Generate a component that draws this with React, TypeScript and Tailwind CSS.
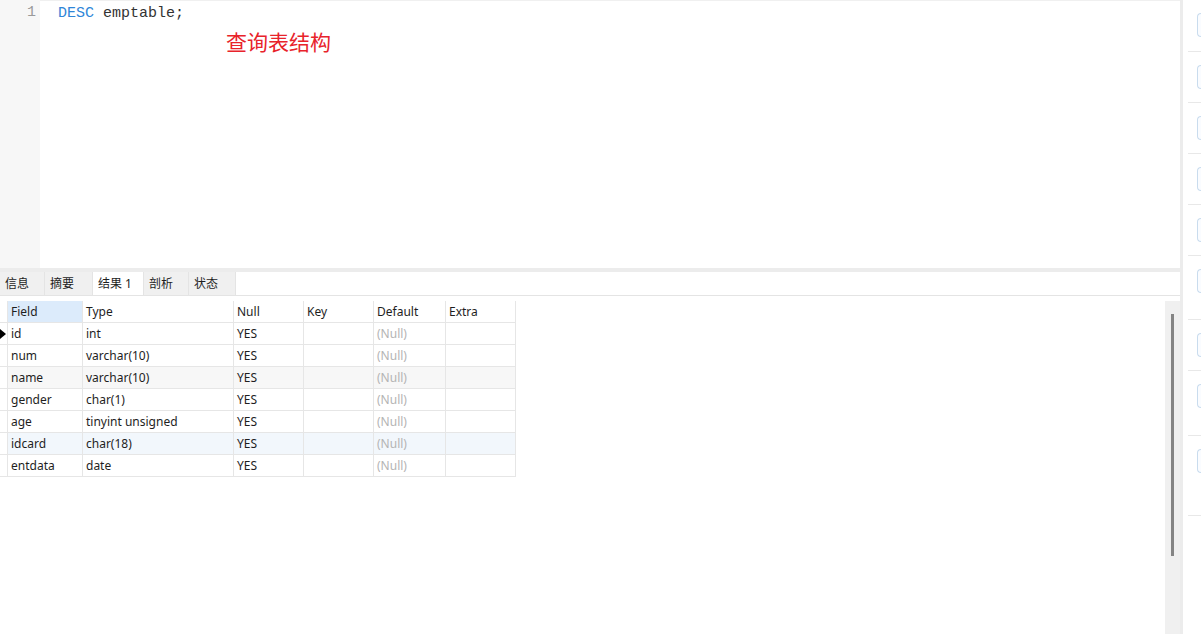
const rows = [
  { field: "id", type: "int", bg: "bg-white" },
  { field: "num", type: "varchar(10)", bg: "bg-white" },
  { field: "name", type: "varchar(10)", bg: "bg-[#f7f7f7]" },
  { field: "gender", type: "char(1)", bg: "bg-white" },
  { field: "age", type: "tinyint unsigned", bg: "bg-white" },
  { field: "idcard", type: "char(18)", bg: "bg-[#f2f7fc]" },
  { field: "entdata", type: "date", bg: "bg-white" },
];

const tabs = [
  { label: "信息", w: "w-[45px]" },
  { label: "摘要", w: "w-[48px]" },
  { label: "结果 1", w: "w-[51px]", active: true },
  { label: "剖析", w: "w-[45px]" },
  { label: "状态", w: "w-[47px]" },
];

const cell = "h-[22px] border-r border-b border-[#e6e6e6] pl-[3px] pt-[1px] flex items-center truncate";

function Sidebar() {
  const blocks = [52, 51, 51, 51, 51, 64, 51, 65, 80];
  return (
    <div className="flex-1 flex flex-col pl-[5px]">
      {blocks.map((h, i) => (
        <div key={i} className="border-b border-[#e8e8e8] flex items-start pt-[13px] pl-[9px]" style={{ height: h }}>
          <div className="w-[8px] h-[24px] rounded-l-[4px] border border-r-0 border-[#c9dcee] bg-[#fafcff]" />
        </div>
      ))}
    </div>
  );
}

export default function App() {
  return (
    <div className="w-[1201px] h-[634px] flex bg-white overflow-hidden font-['Noto_Sans','Noto_Sans_CJK_SC',sans-serif] text-[#1e1e1e]">
      <div className="w-[1183px] shrink-0 flex flex-col border-r-[3px] border-[#ececec]">
        {/* editor */}
        <div className="h-[268px] flex">
          <div className="w-[40px] bg-[#f7f7f7] pt-[3px] pr-[4px] text-right font-['Liberation_Mono',monospace] text-[15px] leading-[20px] text-[#9a9a9a]">
            1
          </div>
          <div className="flex-1 pl-[18px] pt-[3px] border-t border-[#f0f0f0]">
            <div className="font-['Liberation_Mono',monospace] text-[15px] leading-[20px] text-[#333]">
              <span className="text-[#2f86d8]">DESC</span> emptable;
            </div>
            <div className="pl-[168px] pt-[4px] text-[21px] leading-[26px] text-[#e8232b] font-['Noto_Sans_CJK_SC',sans-serif]">
              查询表结构
            </div>
          </div>
        </div>
        <div className="h-[4px] bg-[#ececec]" />
        {/* tabs */}
        <div className="h-[24px] flex border-b border-[#e4e4e4] text-[12px]">
          {tabs.map((t) => (
            <div
              key={t.label}
              className={`${t.w} h-full flex items-center pl-[5px] pt-[1px] border-r border-[#e4e4e4] ${t.active ? "bg-white" : "bg-[#f0f0f0]"}`}
            >
              {t.label}
            </div>
          ))}
        </div>
        {/* results */}
        <div className="flex-1 flex pt-[5px]">
          <div className="flex-1 text-[12px]">
            <div className="flex w-fit">
              <div className="w-[8px] h-[22px] border-r border-b border-[#e6e6e6]" />
              <div className={`w-[75px] bg-[#dcebfb] ${cell}`}>Field</div>
              <div className={`w-[151px] ${cell}`}>Type</div>
              <div className={`w-[70px] ${cell}`}>Null</div>
              <div className={`w-[70px] ${cell}`}>Key</div>
              <div className={`w-[72px] ${cell}`}>Default</div>
              <div className={`w-[70px] ${cell}`}>Extra</div>
            </div>
            {rows.map((r, i) => (
              <div key={r.field} className={`flex w-fit ${r.bg}`}>
                <div className="w-[8px] h-[22px] border-r border-b border-[#e6e6e6] bg-white flex items-center">
                  {i === 0 && (
                    <div className="w-0 h-0 border-y-[5px] border-y-transparent border-l-[6px] border-l-black" />
                  )}
                </div>
                <div className={`w-[75px] ${cell}`}>{r.field}</div>
                <div className={`w-[151px] ${cell}`}>{r.type}</div>
                <div className={`w-[70px] ${cell}`}>YES</div>
                <div className={`w-[70px] ${cell}`} />
                <div className={`w-[72px] ${cell} text-[#b4b4b4]`}>(Null)</div>
                <div className={`w-[70px] ${cell}`} />
              </div>
            ))}
          </div>
          <div className="w-[15px] bg-[#f0f0f0] flex justify-center pt-[13px]">
            <div className="w-[3px] h-[242px] bg-[#858585]" />
          </div>
        </div>
      </div>
      <Sidebar />
    </div>
  );
}
